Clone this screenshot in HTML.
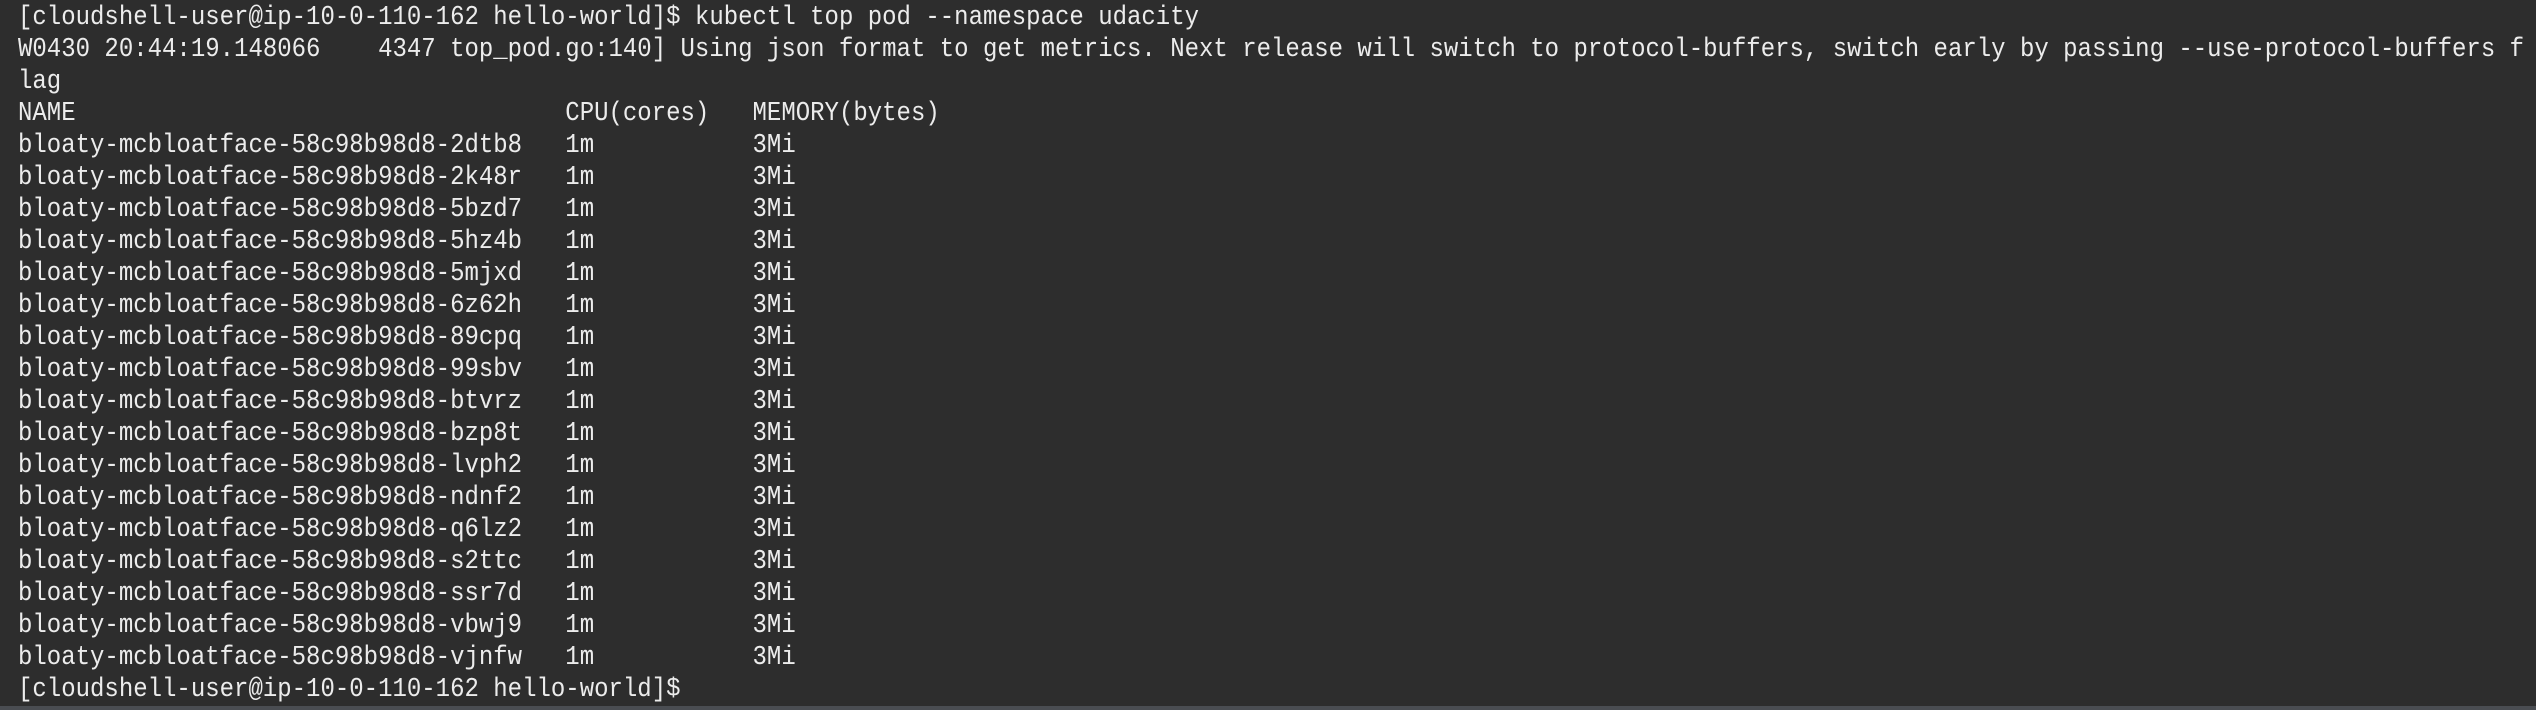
<!DOCTYPE html>
<html><head><meta charset="utf-8"><style>
html,body{margin:0;padding:0;}
body{width:2536px;height:710px;background:#2d2d2d;overflow:hidden;position:relative;}
pre{margin:0;position:absolute;left:18px;top:2px;font-family:"Liberation Mono",monospace;font-size:27px;line-height:32px;color:#ececec;white-space:pre;transform:scaleX(0.8889);transform-origin:0 0;}
.bar{position:absolute;left:0;bottom:0;width:2536px;height:4px;background:#4a4d52;}
</style></head><body><pre>[cloudshell-user@ip-10-0-110-162 hello-world]$ kubectl top pod --namespace udacity
W0430 20:44:19.148066    4347 top_pod.go:140] Using json format to get metrics. Next release will switch to protocol-buffers, switch early by passing --use-protocol-buffers f
lag
NAME                                  CPU(cores)   MEMORY(bytes)
bloaty-mcbloatface-58c98b98d8-2dtb8   1m           3Mi
bloaty-mcbloatface-58c98b98d8-2k48r   1m           3Mi
bloaty-mcbloatface-58c98b98d8-5bzd7   1m           3Mi
bloaty-mcbloatface-58c98b98d8-5hz4b   1m           3Mi
bloaty-mcbloatface-58c98b98d8-5mjxd   1m           3Mi
bloaty-mcbloatface-58c98b98d8-6z62h   1m           3Mi
bloaty-mcbloatface-58c98b98d8-89cpq   1m           3Mi
bloaty-mcbloatface-58c98b98d8-99sbv   1m           3Mi
bloaty-mcbloatface-58c98b98d8-btvrz   1m           3Mi
bloaty-mcbloatface-58c98b98d8-bzp8t   1m           3Mi
bloaty-mcbloatface-58c98b98d8-lvph2   1m           3Mi
bloaty-mcbloatface-58c98b98d8-ndnf2   1m           3Mi
bloaty-mcbloatface-58c98b98d8-q6lz2   1m           3Mi
bloaty-mcbloatface-58c98b98d8-s2ttc   1m           3Mi
bloaty-mcbloatface-58c98b98d8-ssr7d   1m           3Mi
bloaty-mcbloatface-58c98b98d8-vbwj9   1m           3Mi
bloaty-mcbloatface-58c98b98d8-vjnfw   1m           3Mi
[cloudshell-user@ip-10-0-110-162 hello-world]$ </pre><div class="bar"></div></body></html>
